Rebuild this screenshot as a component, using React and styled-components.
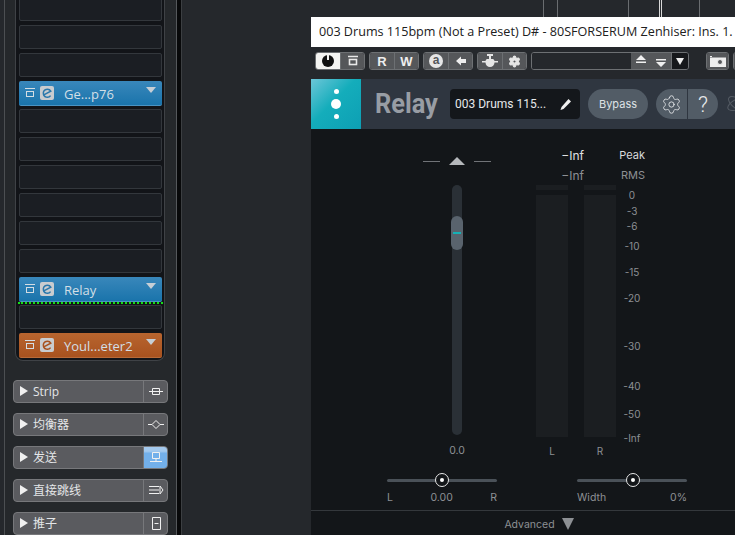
import React from "react";
import styled, { createGlobalStyle } from "styled-components";
import { Settings } from "lucide-react";

const Global = createGlobalStyle`
  html, body { margin: 0; padding: 0; background: #25282c; }
  body { width: 735px; height: 535px; overflow: hidden; font-family: "Open Sans", "Noto Sans CJK SC", sans-serif; }
`;

const Page = styled.div`
  display: flex;
  width: 735px;
  height: 535px;
  overflow: hidden;
  background: #25282c;
`;

/* left channel strip */
const Rail = styled.div`
  width: 173px;
  margin-left: 4px;
  height: 535px;
  box-sizing: border-box;
  background: #25282b;
  border-left: 1px solid #4c4f52;
  border-right: 1px solid #55585b;
  flex-shrink: 0;
  overflow: hidden;
`;
const Gutter = styled.div`
  width: 4px;
  background: #08090a;
  flex-shrink: 0;
`;
const GutterLine = styled.div`
  width: 1px;
  background: #3c3f42;
  flex-shrink: 0;
`;
const InsertPanel = styled.div`
  width: 150px;
  height: 361px;
  margin-left: 10px;
  box-sizing: border-box;
  padding: 0 2px 3px 3px;
  background: #121418;
  border: 1px solid #3f4246;
  border-top: 0;
  border-radius: 0 0 8px 8px;
  display: flex;
  flex-direction: column;
  justify-content: flex-end;
  gap: 4px;
  overflow: hidden;
`;
const Slot = styled.div`
  height: 24px;
  flex-shrink: 0;
  box-sizing: border-box;
  background: #1b1e23;
  border: 1px solid #33373c;
  border-radius: 2px;
`;
const Plug = styled.div`
  height: 25px;
  margin-bottom: -1px;
  flex-shrink: 0;
  box-sizing: border-box;
  display: flex;
  align-items: center;
  padding: 0 4px 0 5px;
  color: #d3dfe6;
  font-size: 13px;
  border-radius: 2px;
  background: ${(p) => p.$color === "orange"
    ? "linear-gradient(#b8652f, #a8521f)"
    : "linear-gradient(#3987bb, #1a74ab)"};
  border-bottom: 1px solid ${(p) => (p.$color === "orange" ? "#b86a38" : "#4a93c2")};
`;
const PlugIcon = styled.span`
  display: flex;
  width: 14px;
  height: 14px;
  margin: 0 9px 0 4px;
  background: #c9cccf;
  border-radius: 2px;
`;
const PlugName = styled.span`
  flex: 1;
  margin-left: 1px;
  padding-top: 1px;
`;
const PlugArrow = styled.span`
  width: 0;
  height: 0;
  margin: 0 2px 6px 0;
  border-left: 5px solid transparent;
  border-right: 5px solid transparent;
  border-top: 6px solid #c6cfd6;
`;
const GreenLine = styled.div`
  height: 0;
  margin: -3px -1px -3px;
  border-top: 2px dotted #16e016;
  flex-shrink: 0;
`;
const Sections = styled.div`
  display: flex;
  flex-direction: column;
  gap: 10px;
  margin: 19px 0 0 8px;
`;
const Section = styled.div`
  width: 155px;
  height: 23px;
  box-sizing: border-box;
  display: flex;
  background: #5a5b5f;
  border: 1px solid #77787b;
  border-radius: 4px;
  color: #e4e6e8;
  font-size: 12px;
  line-height: 22px;
  overflow: hidden;
`;
const SectionArrow = styled.span`
  width: 0;
  height: 0;
  margin: 5px 5px 0 6px;
  border-top: 5px solid transparent;
  border-bottom: 5px solid transparent;
  border-left: 8px solid #f0f0f0;
`;
const SectionLabel = styled.span`
  flex: 1;
`;
const SectionIcon = styled.span`
  width: 23px;
  display: flex;
  align-items: center;
  justify-content: center;
  border-left: 1px solid #77787b;
  background: ${(p) => (p.$active ? "linear-gradient(#a3c9ee 0 20%, #73b0ea 30%)" : "transparent")};
`;

/* workspace with the plugin window */
const Workspace = styled.div`
  flex: 1;
  min-width: 0;
  padding-left: 129px;
  background: #25282c;
`;
const Ruler = styled.div`
  height: 17px;
  display: flex;
`;
const Tick = styled.i`
  width: 1px;
  height: 17px;
  margin-left: ${(p) => p.$left}px;
  background: ${(p) => p.$bright ? "#d8d8d8" : "#6a6d70"};
`;
const TitleBar = styled.div`
  height: 30px;
  background: #ffffff;
  color: #202020;
  font-size: 12.6px;
  line-height: 30px;
  padding-left: 8px;
  white-space: nowrap;
  overflow: hidden;
`;
const Toolbar = styled.div`
  height: 32px;
  box-sizing: border-box;
  display: flex;
  padding: 5px 0 0 4px;
  background: #25282c;
  white-space: nowrap;
`;
const ToolGroup = styled.div`
  display: flex;
  height: 18px;
  margin-right: ${(p) => p.$gap ?? 4}px;
  border-radius: 3px;
  overflow: hidden;
  flex-shrink: 0;
  border: 1px solid #6d7073;
  box-sizing: border-box;
`;
const ToolBtn = styled.div`
  width: ${(p) => p.$w || 24}px;
  box-sizing: border-box;
  display: flex;
  align-items: center;
  justify-content: center;
  font: 700 13px "Liberation Sans", sans-serif;
  color: ${(p) => (p.$on ? "#111" : "#eee")};
  background: ${(p) => (p.$on ? "#f4f4f2" : p.$dark ? "#16181b" : "#55575a")};
  & + & { border-left: 1px solid #6d7073; }
  & svg circle { fill: #55575a; }
`;
const ADisc = styled.span`
  width: 14px;
  height: 14px;
  border-radius: 50%;
  background: #e6e6e6;
  color: #55575a;
  font: 700 12px/13px "Liberation Sans", sans-serif;
  text-align: center;
`;
const NameField = styled.div`
  width: 99px;
  background: #25282c;
`;

const Plugin = styled.div`
  width: 424px;
  height: 456px;
  background: #131619;
  display: flex;
  flex-direction: column;
`;
const Header = styled.div`
  height: 50px;
  display: flex;
  align-items: center;
  background: #2f3640;
  flex-shrink: 0;
  overflow: hidden;
  & > * { flex-shrink: 0; }
`;
const Logo = styled.div`
  width: 50px;
  height: 50px;
  display: flex;
  flex-direction: column;
  align-items: center;
  justify-content: center;
  gap: 5px;
  background: linear-gradient(135deg, #6cc6d8 0%, #14adbb 45%, #0d9fb4 100%);
`;
const Dot = styled.i`
  width: ${(p) => p.$s}px;
  height: ${(p) => p.$s}px;
  border-radius: 50%;
  background: #fff;
`;
const PluginName = styled.div`
  width: 75px;
  margin-left: 14px;
  font: 700 27px/50px "Roboto", sans-serif;
  color: #989da4;
  transform: scaleX(0.94);
  transform-origin: left;
`;
const PresetBox = styled.div`
  width: 130px;
  height: 30px;
  box-sizing: border-box;
  display: flex;
  align-items: center;
  justify-content: space-between;
  padding: 0 8px 0 5px;
  background: #14171b;
  border-radius: 4px;
  color: #e6e8ea;
  font: 12px "Roboto", sans-serif;
`;
const Bypass = styled.div`
  width: 60px;
  height: 30px;
  margin-left: 8px;
  border-radius: 15px;
  background: #525c66;
  color: #dfe2e5;
  font: 11px/30px "Inter", sans-serif;
  text-align: center;
`;
const IconPill = styled.div`
  display: flex;
  height: 30px;
  margin-left: 8px;
  border-radius: 15px;
  overflow: hidden;
`;
const PillPart = styled.div`
  width: ${(p) => p.$w}px;
  display: flex;
  align-items: center;
  justify-content: center;
  background: #525c66;
  color: #e6e8ea;
  font: 300 22px "Roboto", sans-serif;
  & + & { border-left: 1px solid #2f3640; }
`;
const FaintMark = styled.div`
  margin-left: 8px;
  display: flex;
  opacity: 0.35;
`;

const Controls = styled.div`
  display: flex;
  height: 331px;
  flex-shrink: 0;
  padding-left: 76px;
  box-sizing: border-box;
`;
const FaderCol = styled.div`
  width: 110px;
  box-sizing: border-box;
  padding-left: 30px;
  margin-right: 39px;
  display: flex;
  flex-direction: column;
  align-items: center;
`;
const GainMark = styled.div`
  height: 56px;
  box-sizing: border-box;
  padding-top: 28px;
  display: flex;
  align-items: flex-start;
  gap: 9px;
`;
const Dash = styled.i`
  width: 17px;
  height: 1px;
  margin-top: 4px;
  background: #707377;
`;
const UpArrow = styled.i`
  width: 0;
  height: 0;
  border-left: 8px solid transparent;
  border-right: 8px solid transparent;
  border-bottom: 8px solid #b5b8bb;
`;
const Track = styled.div`
  position: relative;
  width: 10px;
  height: 250px;
  border-radius: 5px;
  background: #2a3036;
`;
const Thumb = styled.div`
  position: absolute;
  top: 31px;
  left: -1px;
  width: 12px;
  height: 34px;
  border-radius: 6px;
  background: #59636d;
  &::after {
    content: "";
    position: absolute;
    left: 2px;
    top: 16px;
    width: 8px;
    height: 2px;
    background: #15b0b5;
  }
`;
const Value = styled.div`
  margin-top: 9px;
  font: 10.5px/14px "Inter", sans-serif;
  color: #8d9094;
`;
const MeterGrid = styled.div`
  display: grid;
  grid-template-columns: 32px 16px 32px 32px;
  grid-template-rows: 36px 20px 252px auto;
  width: 112px;
`;
const Readout = styled.div`
  grid-column: 1 / 3;
  grid-row: ${(p) => p.$row};
  align-self: center;
  text-align: right;
  font: 12px "Inter", sans-serif;
  color: ${(p) => p.$color};
  ${(p) => p.$row === 1 ? "padding-top: 16px;" : ""}
`;
const MeterTag = styled.div`
  grid-column: 3 / 5;
  grid-row: ${(p) => p.$row};
  align-self: center;
  text-align: right;
  font: 11px "Inter", sans-serif;
  color: ${(p) => p.$color};
  padding-right: 3px;
  ${(p) => p.$row === 1 ? "padding-top: 16px;" : ""}
`;
const Bar = styled.div`
  grid-column: ${(p) => p.$col};
  grid-row: 3;
  display: flex;
  flex-direction: column;
  gap: 5px;
`;
const BarPeak = styled.i`
  height: 5px;
  background: #1b1e21;
`;
const BarBody = styled.i`
  flex: 1;
  background: #1b1e21;
`;
const Scale = styled.div`
  grid-column: 4;
  grid-row: 3;
  position: relative;
`;
const ScaleMark = styled.span`
  position: absolute;
  left: 0;
  right: 0;
  top: ${(p) => p.$y - 185 - 6}px;
  text-align: center;
  font: 10px/12px "Inter", sans-serif;
  color: #8d9094;
`;
const ChannelTag = styled.div`
  grid-column: ${(p) => p.$col};
  grid-row: 4;
  margin-top: 7px;
  text-align: center;
  font: 10px/14px "Inter", sans-serif;
  color: #8d9094;
`;
const SliderRow = styled.div`
  display: flex;
  height: 51px;
  flex-shrink: 0;
  padding: 13px 0 0 76px;
  box-sizing: border-box;
  border-bottom: 1px solid #34383c;
`;
const SliderBox = styled.div`
  width: 110px;
  margin-right: ${(p) => p.$gap || 0}px;
`;
const SliderLine = styled.div`
  position: relative;
  height: 3px;
  margin-top: 6px;
  border-radius: 2px;
  background: #4a5158;
`;
const Knob = styled.i`
  position: absolute;
  left: ${(p) => p.$x}px;
  top: -6px;
  width: 14px;
  height: 14px;
  margin-left: -7px;
  border: 1px solid #e8e8e8;
  border-radius: 50%;
  background: #131619;
  box-sizing: border-box;
  &::after {
    content: "";
    position: absolute;
    left: 4px;
    top: 4px;
    width: 4px;
    height: 4px;
    border-radius: 50%;
    background: #fff;
  }
`;
const SliderText = styled.div`
  display: flex;
  justify-content: space-between;
  margin-top: 9px;
  font: 10.5px/14px "Inter", sans-serif;
  color: #8d9094;
`;
const Footer = styled.div`
  flex: 1;
  display: flex;
  align-items: center;
  justify-content: center;
  gap: 7px;
  font: 10.5px "Inter", sans-serif;
  color: #8d9094;
  padding: 2px 0 0 32px;
`;
const DownArrow = styled.i`
  width: 0;
  height: 0;
  border-left: 6px solid transparent;
  border-right: 6px solid transparent;
  border-top: 12px solid #8d9094;
`;

const Stroke = ({ w = 16, h = 14, children, color = "#e8e8e8", sw = 1 }) => (
  <svg width={w} height={h} viewBox={`0 0 ${w} ${h}`} fill="none" stroke={color} strokeWidth={sw}>
    {children}
  </svg>
);

const MonitorIcon = ({ color, sw }) => (
  <Stroke w={12} h={12} color={color} sw={sw}>
    <path d="M1 1.500h10" />
    <rect x="2.500" y="4.500" width="7" height="5" />
  </Stroke>
);

const Plugged = ({ name, color }) => (
  <Plug $color={color}>
    <MonitorIcon color="#d4dde3" />
    <PlugIcon>
      <Stroke w={14} h={14} sw={1.5} color={color === "orange" ? "#a8521f" : "#2a78ac"}>
        <path d="M3.800 8.800L10.800 5.200A4 4 0 0 0 3.400 7.800A4 4 0 0 0 10.600 9.600" />
      </Stroke>
    </PlugIcon>
    <PlugName>{name}</PlugName>
    <PlugArrow />
  </Plug>
);

const Empty = ({ n }) => Array.from({ length: n }, (_, i) => <Slot key={i} />);

const sections = [
  { label: "Strip", icon: <path d="M1 7.500h14M4.500 4.500h7v6h-7z" /> },
  { label: "均衡器", icon: <path d="M0 7.500h4M12 7.500h4M8 3.500l4 4-4 4-4-4z" /> },
  { label: "发送", active: true, icon: <path d="M4.500 2.500h7v6h-7zM8 8.500v3M2 11.500h12" /> },
  { label: "直接跳线", icon: <path d="M1 3.500h10M1 7h10M1 10.500h10M12 3l3 4-3 4z" /> },
  { label: "推子", icon: <path d="M4.500 1.500h8v12h-8zM6.500 7.500h4" /> },
];

const scale = [
  ["0", 195], ["-3", 211], ["-6", 226], ["-10", 246], ["-15", 272], ["-20", 298],
  ["-30", 346], ["-40", 386], ["-50", 414], ["-Inf", 438],
];

export default function App() {
  return (
    <Page>
      <Global />
      <Rail>
        <InsertPanel>
          <Empty n={3} />
          <Plugged name="Ge...p76" />
          <Empty n={6} />
          <Plugged name="Relay" />
          <GreenLine />
          <Slot />
          <Plugged name="Youl...eter2" color="orange" />
        </InsertPanel>
        <Sections>
          {sections.map((s) => (
            <Section key={s.label}>
              <SectionArrow />
              <SectionLabel>{s.label}</SectionLabel>
              <SectionIcon $active={s.active}>
                <Stroke w={16} h={15} color="#f0f0f0">{s.icon}</Stroke>
              </SectionIcon>
            </Section>
          ))}
        </Sections>
      </Rail>
      <Gutter />
      <GutterLine />
      <Workspace>
        <Ruler>
          <Tick $left={232} />
          <Tick $left={13} />
          <Tick $left={70} />
          <Tick $left={30} $bright />
          <Tick $left={1} $bright />
          <Tick $left={37} />
        </Ruler>
        <TitleBar>003 Drums 115bpm (Not a Preset) D# - 80SFORSERUM Zenhiser: Ins. 1.</TitleBar>
        <Toolbar>
          <ToolGroup>
            <ToolBtn $on>
              <svg width="12" height="12" viewBox="0 0 12 12"><path d="M6 0a6 6 0 1 1 0 12a6 6 0 1 1 0-12z" fill="#111" /><rect x="5" y="0" width="2" height="5" fill="#f4f4f2" /></svg>
            </ToolBtn>
            <ToolBtn><MonitorIcon sw={1.6} /></ToolBtn>
          </ToolGroup>
          <ToolGroup>
            <ToolBtn>R</ToolBtn>
            <ToolBtn>W</ToolBtn>
          </ToolGroup>
          <ToolGroup>
            <ToolBtn><ADisc>a</ADisc></ToolBtn>
            <ToolBtn>
              <svg width="12" height="10" viewBox="0 0 12 10"><path d="M1 5l5-4.500V3h5v4H6v2.500z" fill="#eee" /></svg>
            </ToolBtn>
          </ToolGroup>
          <ToolGroup>
            <ToolBtn>
              <svg width="16" height="14" viewBox="0 0 16 14"><path d="M5 0h6v2H9v3h2a2.500 2.500 0 0 1 1.500 2H16v1.500h-3.500A4.500 4.500 0 0 1 3.500 8.500H0V7h3.500A2.500 2.500 0 0 1 5 5h2V2H5z" fill="#e6e6e6" /></svg>
            </ToolBtn>
            <ToolBtn>
              <Settings size={13} fill="#e6e6e6" stroke="#e6e6e6" strokeWidth={2} />
            </ToolBtn>
          </ToolGroup>
          <ToolGroup $gap={17}>
            <NameField />
            <ToolBtn $w={40}>
              <svg width="30" height="12" viewBox="0 0 30 12"><path d="M0 5l5-5 5 5zM0 6.500h10V8H0zM20 4h10v1.500H20zM20 7h10l-5 5z" fill="#f0f0f0" /></svg>
            </ToolBtn>
            <ToolBtn $w={17} $dark>
              <svg width="8" height="8" viewBox="0 0 8 8"><path d="M0 1h8L4 8z" fill="#eee" /></svg>
            </ToolBtn>
          </ToolGroup>
          <ToolGroup>
            <ToolBtn $w={21}>
              <svg width="16" height="12" viewBox="0 0 16 12"><path d="M0 1h2v1H0zM0 2.500h16V12H0z" fill="#eee" /><circle cx="10" cy="7" r="2.500" stroke="#eee" strokeWidth="1" /></svg>
            </ToolBtn>
          </ToolGroup>
          <ToolGroup><ToolBtn /></ToolGroup>
        </Toolbar>
        <Plugin>
          <Header>
            <Logo>
              <Dot $s={5} />
              <Dot $s={10} />
              <Dot $s={5} />
            </Logo>
            <PluginName>Relay</PluginName>
            <PresetBox>
              003 Drums 115...
              <svg width="13" height="13" viewBox="0 0 13 13"><path d="M9.500 1l2.500 2.500-7.500 7.500-3 1 1-3z" fill="#f0f0f0" /></svg>
            </PresetBox>
            <Bypass>Bypass</Bypass>
            <IconPill>
              <PillPart $w={31}><Settings size={21} strokeWidth={1} /></PillPart>
              <PillPart $w={30}>?</PillPart>
            </IconPill>
            <FaintMark>
              <svg width="20" height="22" viewBox="0 0 20 22" fill="none" stroke="#9aa0a6" strokeWidth="1">
                <ellipse cx="12" cy="11" rx="11" ry="5" transform="rotate(35 12 11)" />
                <ellipse cx="12" cy="11" rx="11" ry="5" transform="rotate(-25 12 11)" />
              </svg>
            </FaintMark>
          </Header>
          <Controls>
            <FaderCol>
              <GainMark>
                <Dash />
                <UpArrow />
                <Dash />
              </GainMark>
              <Track><Thumb /></Track>
              <Value>0.0</Value>
            </FaderCol>
            <MeterGrid>
              <Readout $row={1} $color="#e0e2e4">−Inf</Readout>
              <Readout $row={2} $color="#8d9094">−Inf</Readout>
              <MeterTag $row={1} $color="#d8dadc">Peak</MeterTag>
              <MeterTag $row={2} $color="#8d9094">RMS</MeterTag>
              <Bar $col={1}><BarPeak /><BarBody /></Bar>
              <Bar $col={3}><BarPeak /><BarBody /></Bar>
              <Scale>
                {scale.map(([t, y]) => <ScaleMark key={t} $y={y}>{t}</ScaleMark>)}
              </Scale>
              <ChannelTag $col={1}>L</ChannelTag>
              <ChannelTag $col={3}>R</ChannelTag>
            </MeterGrid>
          </Controls>
          <SliderRow>
            <SliderBox $gap={80}>
              <SliderLine><Knob $x={55} /></SliderLine>
              <SliderText><span>L</span><span>0.00</span><span>R</span></SliderText>
            </SliderBox>
            <SliderBox>
              <SliderLine><Knob $x={56} /></SliderLine>
              <SliderText><span>Width</span><span>0%</span></SliderText>
            </SliderBox>
          </SliderRow>
          <Footer>
            Advanced
            <DownArrow />
          </Footer>
        </Plugin>
      </Workspace>
    </Page>
  );
}
